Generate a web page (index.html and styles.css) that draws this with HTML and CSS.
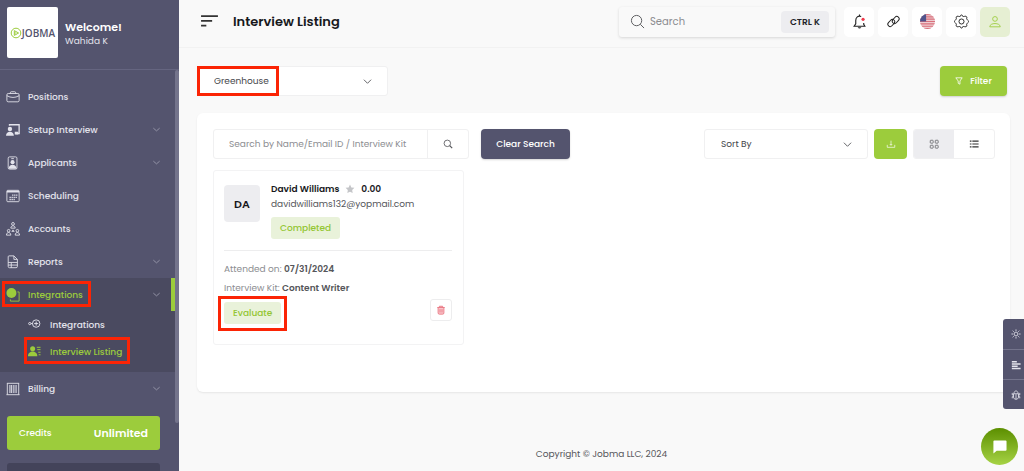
FILE: index.html
```html
<!DOCTYPE html>
<html lang="en">
<head>
<meta charset="utf-8">
<meta name="viewport" content="width=device-width, initial-scale=1">
<title>Interview Listing</title>
<link rel="stylesheet" href="styles.css">
</head>
<body>
<div class="app">
  <aside class="sidebar">
    <div class="profile">
      <div class="logo">
        <svg class="logo-mark" viewBox="0 0 12 12"><circle cx="6" cy="6" r="4.8"/><path d="M4.300 3.600 8.600 6 4.300 8.400zM4.300 6h2"/></svg>
        <span>JOBMA</span>
      </div>
      <div>
        <div class="welcome">Welcome!</div>
        <div class="username">Wahida K</div>
      </div>
    </div>
    <nav class="nav">
      <a class="nav-item" href="#"><svg class="icon nav-icon" viewBox="0 0 16 16"><rect x="1" y="4" width="14" height="9.500" rx="1.500"/><path d="M5 4V3a1 1 0 0 1 1-1h4a1 1 0 0 1 1 1v1M1 6.500q7 4 14 0"/></svg><span>Positions</span></a>
      <a class="nav-item" href="#"><svg class="icon nav-icon" viewBox="0 0 16 16"><path d="M4 3V2h11v10h-4" stroke-width="1.500"/><circle class="solid" cx="4.500" cy="6.800" r="2.500"/><path class="solid" d="M0 14.500c0-6 9-6 9 0zM10 10h4v3h-4z"/></svg><span>Setup Interview</span><svg class="icon chevron" viewBox="0 0 10 10"><path d="m1.500 3.500 3.500 3 3.500-3"/></svg></a>
      <a class="nav-item" href="#"><svg class="icon nav-icon" viewBox="0 0 16 16"><rect x="2.500" y="1" width="10" height="14" rx="1.500"/><path d="M6 3h3"/><circle class="solid" cx="7.500" cy="7" r="2.300"/><path class="solid" d="M3 14.500c0-6 9-6 9 0z"/></svg><span>Applicants</span><svg class="icon chevron" viewBox="0 0 10 10"><path d="m1.500 3.500 3.500 3 3.500-3"/></svg></a>
      <a class="nav-item" href="#"><svg class="icon nav-icon" viewBox="0 0 16 16"><rect x="1" y="1.500" width="14" height="13" rx="1"/><path d="M1 3h14" stroke-width="2"/><path d="M7 7h6M4 9.500h9M4 12h6" stroke-width="1.500" stroke-dasharray="1.500 .8"/></svg><span>Scheduling</span></a>
      <a class="nav-item" href="#"><svg class="icon nav-icon" viewBox="0 0 16 16"><circle cx="8" cy="2.200" r="1.600"/><path d="M5.500 7c0-3.500 5-3.500 5 0z"/><path class="solid" d="m8 8.500 2 2.500H6z"/><circle cx="3" cy="10" r="1.500"/><path d="M.5 15c0-4 5-4 5 0z"/><circle cx="13" cy="10" r="1.500"/><path d="M10.500 15c0-4 5-4 5 0z"/></svg><span>Accounts</span></a>
      <a class="nav-item" href="#"><svg class="icon nav-icon" viewBox="0 0 16 16"><path d="M2.500 13V2a1 1 0 0 1 1-1H9l4 4v8a1.500 1.500 0 0 1-1.500 1.500H4A1.500 1.500 0 0 1 2.500 13M9 1v4h4M2.500 8.500H13M2.500 11.500H13M6 8.500v6"/></svg><span>Reports</span><svg class="icon chevron" viewBox="0 0 10 10"><path d="m1.500 3.500 3.500 3 3.500-3"/></svg></a>
      <div class="nav-group">
        <a class="nav-item active" href="#"><svg class="icon nav-icon" viewBox="0 0 16 16"><circle class="solid" cx="6.200" cy="5.700" r="5.700"/><path d="M13 4.500h2V15H5v-2"/></svg><span>Integrations</span><svg class="icon chevron" viewBox="0 0 10 10"><path d="m1.500 3.500 3.500 3 3.500-3"/></svg><i class="mark mark-group"></i></a>
        <a class="sub-item" href="#"><svg class="icon sub-icon" viewBox="0 0 14 14"><circle cx="1.900" cy="6" r="1.200"/><path d="M3.200 6H5M8.800 3.800v4.400M6.600 6H11"/><circle cx="8.800" cy="6" r="4"/></svg><span>Integrations</span></a>
        <a class="sub-item current" href="#"><svg class="icon sub-icon" viewBox="0 0 14 14"><circle class="solid" cx="5" cy="4" r="2.700"/><path class="solid" d="M0 12c0-6.500 10-6.500 10 0z"/><path d="M9.500 2.500h4M10 5h3.500M11 7.800h2.500M11.500 10.500h2"/></svg><span>Interview Listing</span><i class="mark mark-sub"></i></a>
      </div>
      <a class="nav-item" href="#"><svg class="icon nav-icon" viewBox="0 0 16 16"><path d="M1 1.500h14M.5 14.500h15M1.500 1.500v13M14.500 1.500v13"/><path d="M4.500 3.500v9M6.500 3.500v9M9 3.500v9M11.500 3.500v9" stroke-width="1.200"/></svg><span>Billing</span><svg class="icon chevron" viewBox="0 0 10 10"><path d="m1.500 3.500 3.500 3 3.500-3"/></svg></a>
      <div class="credits"><span>Credits</span><strong>Unlimited</strong></div>
      <div class="next-panel"></div>
    </nav>
    <div class="scroll-thumb"></div>
  </aside>

  <div class="page">
    <header class="topbar">
      <button class="menu-btn" aria-label="Toggle menu"><svg class="icon" viewBox="0 0 18 14"><path d="M1 2h16M1 6.500h10.500M1 11h5" stroke-width="1.500"/></svg></button>
      <h1>Interview Listing</h1>
      <div class="search">
        <svg class="icon" viewBox="0 0 16 16"><circle cx="7" cy="7" r="5.500"/><path d="m11 11 4 4"/></svg>
        <input type="text" placeholder="Search" aria-label="Search">
        <kbd>CTRL K</kbd>
      </div>
      <div class="actions">
        <button aria-label="Notifications"><svg class="icon" viewBox="0 0 16 16"><path d="M9.800 2.700C6.500 1.500 4 3.500 4 7v3.500L2.300 13h11.400L12.500 11V9.500M8 2.300V.5" stroke-width="1.200"/><path class="solid" d="M6 14h4q-2 3-4 0"/><circle cx="11.800" cy="5.700" r="1.700" fill="#f03a4b" stroke="none"/></svg></button>
        <button aria-label="Copy link"><svg class="icon" viewBox="0 0 16 16"><g transform="rotate(-48 8 8)"><rect x="1" y="4.800" width="8.500" height="5" rx="2.500"/><rect x="6.500" y="6.200" width="8.500" height="5" rx="2.500"/></g></svg></button>
        <button aria-label="Language"><svg class="flag" viewBox="0 0 16 16"><defs><clipPath id="round"><circle cx="8" cy="8" r="8"/></clipPath></defs><g clip-path="url(#round)"><path fill="#edcdd1" d="M0 0h16v16H0z"/><path stroke="#d9707c" stroke-width="1.200" d="M0 .6h16M0 3h16M0 5.500h16M0 8h16M0 10.500h16M0 13h16M0 15.500h16"/><path fill="#50548c" d="M0 0h6.500v8H0z"/></g></svg></button>
        <button aria-label="Settings"><svg class="icon" viewBox="0 0 16 16"><circle cx="8" cy="8" r="2.700"/><path d="M8 1q1 0 1.300 1.500 1 .4 2 0Q13 2 13.500 3t0 2q.4 1 1 1.500Q15.500 7 15.500 8t-1 1.500q-.6.500-1 1.500.4 1 0 2t-2.200.5q-1-.4-2 0Q9 15 8 15t-1.300-1.500q-1-.4-2 0Q3 14 2.500 13t0-2q-.4-1-1-1.500Q.5 9 .5 8t1-1.500q.6-.5 1-1.500-.4-1 0-2t2.200-.5q1 .4 2 0Q7 1 8 1z"/></svg></button>
        <button class="account" aria-label="Account"><svg class="icon" viewBox="0 0 16 16"><circle cx="8" cy="4.500" r="2.700"/><path d="M2 13.500c0-5 12-5 12 0z"/></svg></button>
      </div>
    </header>

    <main class="content">
      <div class="filters">
        <div class="select-wrap source">
          <select aria-label="Integration"><option>Greenhouse</option></select>
          <svg class="icon chevron" viewBox="0 0 10 10"><path d="m1 3 4 4 4-4"/></svg>
          <i class="mark mark-select"></i>
        </div>
        <button class="btn green"><svg class="icon" viewBox="0 0 10 10"><path d="M1 1h8L6.200 5v4L4 7.800V5z"/></svg>Filter</button>
      </div>

      <section class="panel">
        <div class="toolbar">
          <div class="lookup">
            <input type="text" placeholder="Search by Name/Email ID / Interview Kit" aria-label="Search interviews">
            <button aria-label="Run search"><svg class="icon" viewBox="0 0 12 12"><circle cx="5.200" cy="5.200" r="3.900"/><path d="M8 8l3 3" stroke-width="1.500"/></svg></button>
          </div>
          <button class="btn slate">Clear Search</button>
          <div class="select-wrap sort">
            <select aria-label="Sort order"><option>Sort By</option></select>
            <svg class="icon chevron" viewBox="0 0 10 10"><path d="m1 3 4 4 4-4"/></svg>
          </div>
          <button class="btn green download" aria-label="Download"><svg class="icon" viewBox="0 0 12 12"><path d="M1.500 7v3h9V7M6 2v5.500M4.500 6 6 7.500 7.500 6" stroke-width=".8"/></svg></button>
          <div class="views">
            <button class="selected" aria-label="Grid view"><svg class="icon" viewBox="0 0 12 12"><rect x="1.500" y="1.500" width="3.500" height="3.500" rx=".7"/><rect x="7.500" y="1.500" width="3.500" height="3.500" rx=".7"/><rect x="1.500" y="7.500" width="3.500" height="3.500" rx=".7"/><rect x="7.500" y="7.500" width="3.500" height="3.500" rx=".7"/></svg></button>
            <button aria-label="List view"><svg class="icon" viewBox="0 0 12 12"><path d="M1 2.500h2M1 6h2M1 9.500h2M4 2.500h7.500M4 6h7.500M4 9.500h7.500" stroke-width="1.400"/></svg></button>
          </div>
        </div>

        <article class="candidate">
          <div class="person">
            <div class="avatar">DA</div>
            <div class="details">
              <div class="name">David Williams <svg class="star" viewBox="0 0 12 12"><path d="m6 .7 1.600 3.400 3.700.5-2.700 2.600.6 3.700L6 9.200l-3.200 1.700.6-3.700L.7 4.600l3.700-.5z"/></svg> 0.00</div>
              <div class="email">davidwilliams132@yopmail.com</div>
              <span class="tag">Completed</span>
            </div>
          </div>
          <div class="fact">Attended on: <b>07/31/2024</b></div>
          <div class="fact">Interview Kit: <b>Content Writer</b></div>
          <div class="card-actions">
            <button class="tag evaluate">Evaluate<i class="mark mark-evaluate"></i></button>
            <button class="trash" aria-label="Delete"><svg class="icon" viewBox="0 0 12 12"><path d="M1.500 3h9M4 3V1.500h4V3M2.500 3v6.500a1.500 1.500 0 0 0 1.500 1.500h4a1.500 1.500 0 0 0 1.500-1.500V3M4.800 5v4M7.200 5v4" fill="#f9c5cb"/></svg></button>
          </div>
        </article>
      </section>
    </main>
    <footer class="footer">Copyright © Jobma LLC, 2024</footer>
  </div>

  <div class="dock">
    <button aria-label="Theme"><svg class="icon" viewBox="0 0 12 12"><circle cx="6" cy="6" r="2.300"/><path d="M6 .5V2.500M6 9.500v2M.5 6h2M9.500 6h2M2 2l1.300 1.300M8.700 8.700 10 10M10 2 8.700 3.300M2 10l1.300-1.300"/></svg></button>
    <button aria-label="Layout"><svg class="icon" viewBox="0 0 12 12"><path d="M1 2h6M1 4.700h10.500M1 7.400h7M1 10.100h10.500" stroke-width="1.700"/></svg></button>
    <button aria-label="Report a bug"><svg class="icon" viewBox="0 0 12 12"><path d="M3 4.500h6v4c0 3.500-6 3.500-6 0zM3.500 4.500c0-4.500 5-4.500 5 0M6 5v6M1.500 3.500v2.500H3M10.500 3.500v2.500H9M1.500 10V8H3M10.500 10V8H9"/></svg></button>
  </div>
  <button class="chat" aria-label="Open chat"><svg viewBox="0 0 16 16"><path fill="#fff" d="M2.500 1.500h12a1 1 0 0 1 1 1v9a1 1 0 0 1-1 1H5L1.500 15.500v-13a1 1 0 0 1 1-1"/></svg></button>
</div>
</body>
</html>
```
FILE: styles.css
```css
* { box-sizing: border-box; }

body {
  margin: 0;
  font-family: Poppins, Inter, "Open Sans", sans-serif;
  font-size: 9px;
  line-height: 16px;
  color: #55565a;
  background: #f9f9f9;
}

button, input, select { font: inherit; color: inherit; }
button { padding: 0; border: 0; background: none; }
a { color: inherit; text-decoration: none; }

.icon { display: block; flex: none; fill: none; stroke: currentColor; stroke-width: 1; }
.icon .solid { fill: currentColor; stroke: none; }

.app { display: flex; height: 100vh; overflow: hidden; }

/* Highlight frames */
.mark { position: absolute; border: 3px solid #fb2405; pointer-events: none; }
.mark-group { left: 2px; top: 3px; width: 89px; height: 26px; }
.mark-sub { left: 24px; top: -1px; width: 106px; height: 27px; }
.mark-select { left: 0; top: 0; width: 82px; height: 30px; }
.mark-evaluate { inset: -6px -6px -7px; }

/* Sidebar */
.sidebar {
  position: relative;
  flex: none;
  width: 179px;
  color: #e3e3ec;
  background: #54546e;
  overflow: hidden;
}
.profile {
  display: flex;
  align-items: center;
  gap: 7px;
  height: 70px;
  padding: 0 7px 4px;
  border-bottom: 1px solid #656580;
}
.logo {
  display: flex;
  align-items: center;
  justify-content: center;
  width: 51px;
  height: 51px;
  border-radius: 2px;
  color: #54546e;
  background: #fff;
  font: 600 10px/16px "Open Sans", sans-serif;
}
.logo-mark { width: 12px; height: 12px; fill: none; stroke: #9ccc3c; }
.welcome { font-size: 11px; font-weight: 600; color: #fff; }
.username { line-height: 12px; }
.nav { padding-top: 10px; font-weight: 500; }
.nav-item {
  position: relative;
  display: flex;
  align-items: center;
  gap: 8px;
  height: 33px;
  margin-right: 4px;
  padding: 0 14px 0 6px;
}
.nav-icon { width: 14px; height: 14px; }
.nav-item .chevron { width: 9px; height: 9px; margin-left: auto; color: #9797aa; }
.nav-group { padding-bottom: 7px; background: #4a4a60; }
.active { color: #9ccc3c; border-right: 4px solid #9ccc3c; padding-right: 10px; }
.sub-item {
  position: relative;
  display: flex;
  align-items: center;
  gap: 9px;
  height: 27px;
  padding-left: 28px;
}
.sub-icon { width: 13px; height: 13px; }
.current { color: #9ccc3c; }
.credits {
  display: flex;
  align-items: center;
  justify-content: space-between;
  height: 34px;
  margin: 11px 19px 13px 7px;
  padding: 0 12px;
  border-radius: 3px;
  color: #fff;
  background: #9ccc3c;
}
.credits strong { font-size: 11px; font-weight: 600; }
.next-panel { height: 34px; margin: 0 19px 0 7px; border-radius: 3px; background: #43435a; }
.scroll-thumb { position: absolute; right: 0; top: 70px; width: 4px; height: 353px; border-radius: 2px; background: #74748c; }

/* Header */
.page { display: flex; flex: 1; flex-direction: column; min-width: 0; }
.topbar {
  display: flex;
  align-items: center;
  height: 48px;
  padding: 0 14px 4px 21px;
  border-bottom: 1px solid #f2f2f2;
}
.menu-btn { width: 19px; color: #333; }
.topbar h1 { margin: 0 auto 0 14px; font-size: 13px; line-height: 20px; font-weight: 600; color: #17181c; }
.search {
  display: flex;
  align-items: center;
  gap: 5px;
  width: 216px;
  height: 30px;
  padding: 0 6px 0 11px;
  border-radius: 3px;
  box-shadow: 0 1px 3px #00000024;
}
.search .icon { width: 15px; height: 15px; color: #55565a; }
.search input { flex: 1; min-width: 0; padding: 0; border: 0; background: none; font-size: 10px; }
input::placeholder { color: #8c8d91; opacity: 1; }
kbd {
  padding: 3px 9px;
  border-radius: 4px;
  background: #ededf0;
  color: #222329;
  font: 600 9px/16px Poppins, Inter, sans-serif;
}
.actions { display: flex; gap: 4px; margin-left: 9px; }
.actions button {
  display: grid;
  place-items: center;
  width: 30px;
  height: 30px;
  border-radius: 5px;
  color: #222;
  background: #fff;
}
.actions svg { width: 15px; height: 15px; }
.actions .account { color: #9ccc3c; background: #e6efd3; }
.actions .account svg { width: 14px; height: 14px; }

/* Content */
.content { display: flex; flex: 1; flex-direction: column; gap: 17px; padding: 18px 14px 0 18px; }
.filters { display: flex; justify-content: space-between; padding-right: 3px; }
.select-wrap { position: relative; display: flex; align-items: center; }
.select-wrap select {
  width: 100%;
  height: 30px;
  padding: 0 16px;
  border: 1px solid #f0f0f1;
  border-radius: 3px;
  appearance: none;
  background: #fff;
  color: #45464a;
}
.select-wrap .chevron { position: absolute; right: 16px; width: 9px; height: 9px; }
.source { width: 191px; }
.btn {
  display: flex;
  align-items: center;
  justify-content: center;
  gap: 7px;
  height: 30px;
  border-radius: 4px;
  color: #fff;
  font-weight: 500;
  box-shadow: 0 1px 2px #0000002b;
}
.green { width: 67px; background: #9ccc3c; }
.green .icon { width: 8px; height: 8px; }
.slate { width: 89px; background: #54546e; }
.panel {
  flex: 1;
  padding: 16px 15px 16px 16px;
  border-radius: 6px;
  background: #fff;
  box-shadow: 0 1px 2px #00000014;
}
.toolbar { display: flex; align-items: center; gap: 6px; }
.toolbar .slate { margin: 0 auto 0 6px; }
.lookup {
  display: flex;
  width: 256px;
  height: 30px;
  border: 1px solid #f0f0f1;
  border-radius: 3px;
}
.lookup input { flex: 1; min-width: 0; padding: 0 0 0 15px; border: 0; background: none; }
.lookup button { display: grid; place-items: center; width: 41px; border-left: 1px solid #f0f0f1; }
.lookup .icon { width: 10px; height: 10px; }
.sort { width: 164px; }
.toolbar .download { width: 33px; box-shadow: none; }
.download .icon { width: 10px; height: 10px; }
.views { display: flex; width: 82px; height: 30px; border: 1px solid #f0f0f1; border-radius: 3px; overflow: hidden; }
.views button { display: grid; flex: 1; place-items: center; color: #333; }
.views .selected { background: #ededf0; color: #66676b; }
.views .icon { width: 10px; height: 10px; }

/* Candidate card */
.candidate {
  width: 251px;
  margin-top: 11px;
  padding: 10px 11px 20px 10px;
  border: 1px solid #f3f3f4;
  border-radius: 3px;
}
.person { display: flex; gap: 11px; margin-bottom: 10px; padding-bottom: 11px; border-bottom: 1px solid #ededee; }
.avatar {
  display: grid;
  place-items: center;
  width: 36px;
  height: 37px;
  margin-top: 4px;
  border-radius: 4px;
  background: #ededf0;
  color: #17181c;
  font-size: 11px;
  font-weight: 600;
}
.name { display: flex; align-items: center; gap: 6px; font-weight: 600; color: #17181c; }
.star { width: 10px; height: 10px; fill: #c4c5c8; }
.email { line-height: 14px; }
.tag {
  display: inline-block;
  position: relative;
  margin-top: 6px;
  padding: 3px 9px;
  border-radius: 3px;
  color: #93c632;
  background: #e9f2da;
  font-weight: 500;
}
.details .tag { display: table; }
.fact { margin-bottom: 3px; color: #8c8d91; }
.fact b { font-weight: 600; color: #55565a; }
.card-actions { display: flex; justify-content: space-between; }
.evaluate { margin-top: 3px; }
.trash {
  display: grid;
  place-items: center;
  width: 22px;
  height: 22px;
  border: 1px solid #ededee;
  border-radius: 3px;
  color: #e8717d;
}
.trash .icon { width: 10px; height: 10px; }
.footer { padding: 54px 0 9px; text-align: center; }

/* Floating controls */
.dock {
  position: absolute;
  right: 0;
  top: 319px;
  width: 21px;
  border-radius: 3px 0 0 3px;
  color: #e3e3ec;
  background: #54546e;
}
.dock button { display: grid; place-items: center; width: 100%; height: 30px; padding-left: 5px; }
.dock button + button { border-top: 1px solid #74748c; }
.dock .icon { width: 10px; height: 10px; }
.chat {
  position: absolute;
  right: 6px;
  bottom: 6px;
  display: grid;
  place-items: center;
  width: 37px;
  height: 37px;
  border-radius: 50%;
  background: linear-gradient(#5c8f00, #a6d345);
}
.chat svg { width: 15px; height: 15px; }
```
